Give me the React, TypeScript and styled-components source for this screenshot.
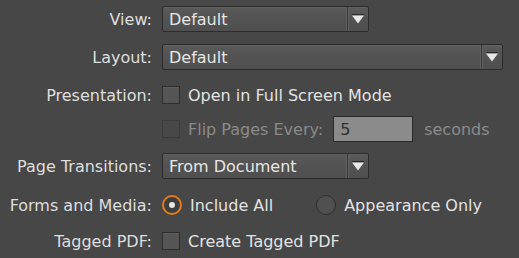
import React, { useState } from 'react'
import styled, { createGlobalStyle } from 'styled-components'

const GlobalStyle = createGlobalStyle`
  html, body {
    margin: 0;
    padding: 0;
    background: #474747;
  }
  body {
    font-family: "DejaVu Sans", "Liberation Sans", sans-serif;
    font-size: 16px;
    color: #dedede;
  }
`

const Panel = styled.div`
  width: 519px;
  height: 258px;
  background: #474747;
  overflow: hidden;
`

const Row = styled.div<{ $h: number }>`
  display: grid;
  grid-template-columns: 152px 1fr;
  column-gap: 10px;
  align-items: center;
  height: ${p => p.$h}px;
`

const Label = styled.div`
  text-align: right;
  white-space: nowrap;
`

const Controls = styled.div`
  display: flex;
  align-items: center;
  white-space: nowrap;
`

const Select = styled.div<{ $w: number }>`
  box-sizing: border-box;
  width: ${p => p.$w}px;
  height: 26px;
  display: flex;
  align-items: center;
  border: 1px solid #2c2c2c;
  border-radius: 2px;
  background: linear-gradient(#5a5a5a, #535353 45%, #4f4f4f);
  box-shadow: inset 0 1px 0 #616161;
  padding-left: 6px;
  color: #e6e6e6;
`

const SelectText = styled.span`
  flex: 1;
`

const ArrowCell = styled.div`
  width: 20px;
  height: 100%;
  display: flex;
  align-items: center;
  justify-content: center;
  border-left: 1px solid #3a3a3a;
  box-shadow: -1px 0 0 #5f5f5f, inset 1px 0 0 #5f5f5f;
  margin-left: 2px;
`

const Check = styled.span<{ $disabled?: boolean }>`
  box-sizing: border-box;
  width: 18px;
  height: 18px;
  flex: none;
  border: 1px solid ${p => (p.$disabled ? '#3c3c3c' : '#2e2e2e')};
  background: ${p => (p.$disabled ? '#484848' : '#555555')};
  box-shadow: ${p => (p.$disabled ? 'none' : 'inset 0 1px 0 #5e5e5e')};
  margin-right: 8px;
`

const Radio = styled.span<{ $on?: boolean }>`
  box-sizing: border-box;
  width: 20px;
  height: 20px;
  flex: none;
  border-radius: 50%;
  border: ${p => (p.$on ? '2px solid #e07c1c' : '1px solid #2e2e2e')};
  background: ${p => (p.$on ? '#3e3e3e' : '#505050')};
  display: flex;
  align-items: center;
  justify-content: center;
  margin-right: 8px;
  &::after {
    content: '';
    display: ${p => (p.$on ? 'block' : 'none')};
    width: 6px;
    height: 6px;
    border-radius: 50%;
    background: #e8e8e8;
  }
`

const Text = styled.span<{ $dim?: boolean }>`
  color: ${p => (p.$dim ? '#8a8a8a' : '#e2e2e2')};
`

const NumberBox = styled.div`
  box-sizing: border-box;
  width: 80px;
  height: 26px;
  margin-left: 10px;
  margin-right: 11px;
  border: 1px solid #2a2a2a;
  background: #8b8b8b;
  color: #303030;
  padding-left: 6px;
  display: flex;
  align-items: center;
`

const Option = styled.label`
  display: flex;
  align-items: center;
  margin-right: 43px;
`

function Arrow() {
  return (
    <svg width="12" height="10" viewBox="0 0 12 10">
      <rect x="0" y="0" width="12" height="1" fill="#2a2a2a" />
      <path d="M0 1.5 L12 1.5 L6 9.5 Z" fill="#e8e8e8" />
    </svg>
  )
}

function Dropdown({ value, width }: { value: string; width: number }) {
  return (
    <Select $w={width}>
      <SelectText>{value}</SelectText>
      <ArrowCell>
        <Arrow />
      </ArrowCell>
    </Select>
  )
}

export default function App() {
  const [forms, setForms] = useState('all')
  return (
    <>
      <GlobalStyle />
      <Panel>
        <Row $h={38}>
          <Label>View:</Label>
          <Controls>
            <Dropdown value="Default" width={207} />
          </Controls>
        </Row>
        <Row $h={38}>
          <Label>Layout:</Label>
          <Controls>
            <Dropdown value="Default" width={341} />
          </Controls>
        </Row>
        <Row $h={38}>
          <Label>Presentation:</Label>
          <Controls>
            <Check />
            <Text>Open in Full Screen Mode</Text>
          </Controls>
        </Row>
        <Row $h={30}>
          <Label></Label>
          <Controls>
            <Check $disabled />
            <Text $dim>Flip Pages Every:</Text>
            <NumberBox>5</NumberBox>
            <Text $dim>seconds</Text>
          </Controls>
        </Row>
        <Row $h={44}>
          <Label>Page Transitions:</Label>
          <Controls>
            <Dropdown value="From Document" width={207} />
          </Controls>
        </Row>
        <Row $h={34}>
          <Label>Forms and Media:</Label>
          <Controls>
            <Option onClick={() => setForms('all')}>
              <Radio $on={forms === 'all'} />
              <Text>Include All</Text>
            </Option>
            <Option onClick={() => setForms('appearance')}>
              <Radio $on={forms === 'appearance'} />
              <Text>Appearance Only</Text>
            </Option>
          </Controls>
        </Row>
        <Row $h={38}>
          <Label>Tagged PDF:</Label>
          <Controls>
            <Check />
            <Text>Create Tagged PDF</Text>
          </Controls>
        </Row>
      </Panel>
    </>
  )
}
